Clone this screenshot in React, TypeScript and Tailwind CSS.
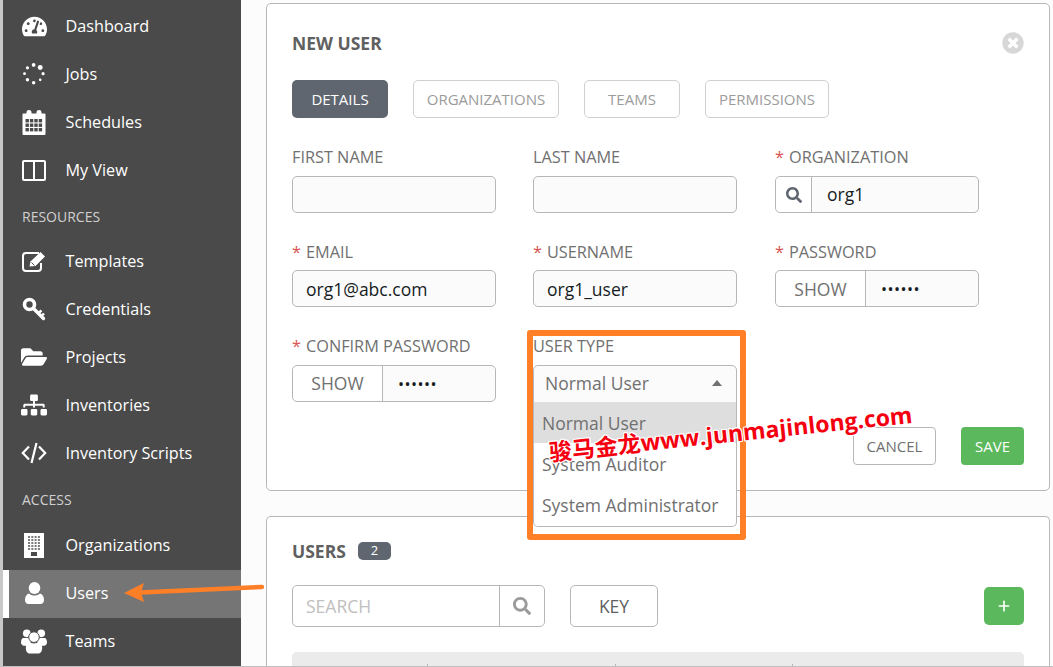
import { ReactNode } from 'react'
import { FaFolderOpen, FaSearch, FaSitemap, FaTachometerAlt, FaTimesCircle } from 'react-icons/fa'
import { Plus } from 'lucide-react'

const font = { fontFamily: '"Open Sans", "Noto Sans CJK SC", sans-serif' }

function JobsIcon() {
  const dots = [
    [16, 3, 2.6],
    [25, 6.5, 3.4],
    [29, 15, 2.2],
    [25, 23.5, 1.8],
    [16, 27.5, 2.4],
    [7.500, 23.5, 2.4],
    [3.5, 15, 2],
    [7.500, 7, 2.2],
  ]
  return (
    <svg width="24" height="24" viewBox="0 0 33 31" fill="white">
      {dots.map(([x, y, r], i) => (
        <circle key={i} cx={x} cy={y} r={r} />
      ))}
    </svg>
  )
}

function CalendarIcon() {
  const cells = [0, 1, 2, 3]
  return (
    <svg width="24" height="25" viewBox="0 0 24 25" fill="white">
      <path d="M1.5 3.5h3V2a2.5 2 0 0 1 5 0v1.5h5V2a2.5 2 0 0 1 5 0v1.5h3a1 1 0 0 1 1 1V24a1 1 0 0 1-1 1h-21a1 1 0 0 1-1-1V4.500a1 1 0 0 1 1-1z" />
      {[9, 13.5, 18].map((y) =>
        cells.map((c) => <rect key={`${y}-${c}`} x={3.5 + c * 4.4} y={y} width="3.4" height="3.4" fill="#4a4a4a" />),
      )}
    </svg>
  )
}

function ColumnsIcon() {
  return (
    <svg width="24" height="21" viewBox="0 0 24 21" fill="none" stroke="white" strokeWidth="2">
      <rect x="1" y="1" width="22" height="19" rx="1" />
      <path d="M12 1v19" />
    </svg>
  )
}

function EditIcon() {
  return (
    <svg width="25" height="21" viewBox="0 0 25 21" fill="none">
      <path d="M17 2H4a3 3 0 0 0-3 3v12a3 3 0 0 0 3 3h12a3 3 0 0 0 3-3v-5" stroke="white" strokeWidth="2" />
      <path d="M7.500 15.500l1-5L18.500 1l4.500 4.500-9.500 9.500z" fill="white" />
      <path d="M9.500 11.500l3 3" stroke="#4a4a4a" strokeWidth="1" />
    </svg>
  )
}

function KeyIcon() {
  return (
    <svg width="24" height="24" viewBox="0 0 24 24" fill="none" stroke="white">
      <circle cx="7.500" cy="7.500" r="5" strokeWidth="3.600" />
      <path d="M11.500 11.500l10 10" strokeWidth="3.400" strokeLinecap="round" />
      <path d="M16.500 16l3-2.500M19.500 19l2.500-2.500" strokeWidth="2.400" />
    </svg>
  )
}

function CodeIcon() {
  return (
    <svg width="26" height="22" viewBox="0 0 26 22" fill="none" stroke="white" strokeWidth="2.200">
      <path d="M8 4.500L1.800 11 8 17.500M18 4.500L24.200 11 18 17.500M15.500 1L10.500 21" />
    </svg>
  )
}

function BuildingIcon() {
  const cols = [0, 1, 2, 3]
  const rows = [0, 1, 2, 3, 4]
  return (
    <svg width="20" height="25" viewBox="0 0 20 25" fill="white">
      <rect x="0" y="0" width="20" height="25" />
      {rows.map((r) =>
        cols.map((c) => <rect key={`${r}-${c}`} x={4 + c * 3.3} y={3 + r * 3} width="2" height="2" fill="#7a7a7a" />),
      )}
      <rect x="7" y="19" width="6" height="4" fill="#4a4a4a" />
    </svg>
  )
}

function UserIcon() {
  return (
    <svg width="19" height="22" viewBox="0 0 19 22" fill="white">
      <ellipse cx="9.500" cy="6" rx="5.800" ry="6" />
      <path d="M4 11.500c1.500 1.500 3.500 2 5.500 2s4-.5 5.500-2c2.500.5 4 3 4 6.500 0 2.500-1.500 4-3.500 4h-12C1.500 22 0 20.500 0 18c0-3.500 1.500-6 4-6.500z" />
    </svg>
  )
}

function TeamIcon() {
  return (
    <svg width="27" height="26" viewBox="0 0 27 26" fill="white">
      <circle cx="6" cy="5" r="4" />
      <circle cx="21" cy="5" r="4" />
      <path d="M2 10h8v8H4c-2 0-4-1-4-3.500C0 12 1 10.500 2 10zM17 10h8c1 .5 2 2 2 4.500 0 2.500-2 3.500-4 3.500h-6z" />
      <circle cx="13.500" cy="9" r="5.500" stroke="#4a4a4a" strokeWidth="1" />
      <path d="M8 14c1.500 1 3.500 1.500 5.500 1.500S17.500 15 19 14c2 .5 3 3 3 6 0 3.500-1.500 6-4 6H9c-2.500 0-4-2.500-4-6 0-3 1-5.500 3-6z" />
    </svg>
  )
}

function NavItem({ icon, label, active }: { icon: ReactNode; label: string; active?: boolean }) {
  return (
    <div
      className={`flex items-center h-12 text-[16.2px] text-white ${
        active ? 'bg-[#757575] border-l-[6px] border-white pb-[2px]' : ''
      }`}
    >
      <span className={`flex items-center justify-center w-[26px] ${active ? 'ml-[12px]' : 'ml-[18px]'}`}>{icon}</span>
      <span className="ml-[18.5px]">{label}</span>
    </div>
  )
}

function NavHeader({ label, className }: { label: string; className: string }) {
  return <div className={`flex items-center pl-[19px] text-[14px] text-[#d0d0d0] ${className}`}>{label}</div>
}

function Sidebar() {
  return (
    <aside className="w-[241px] shrink-0 h-full bg-[#4a4a4a] border-l-[3px] border-[#c8c8c8] pt-[2px] overflow-hidden">
      <NavItem icon={<FaTachometerAlt size={25} color="white" />} label="Dashboard" />
      <NavItem icon={<JobsIcon />} label="Jobs" />
      <NavItem icon={<CalendarIcon />} label="Schedules" />
      <NavItem icon={<ColumnsIcon />} label="My View" />
      <NavHeader label="RESOURCES" className="h-[43px] pt-[2px]" />
      <NavItem icon={<EditIcon />} label="Templates" />
      <NavItem icon={<KeyIcon />} label="Credentials" />
      <NavItem icon={<FaFolderOpen size={26} color="white" />} label="Projects" />
      <NavItem icon={<FaSitemap size={26} color="white" />} label="Inventories" />
      <NavItem icon={<CodeIcon />} label="Inventory Scripts" />
      <NavHeader label="ACCESS" className="h-[44px]" />
      <NavItem icon={<BuildingIcon />} label="Organizations" />
      <div className="h-px" />
      <NavItem active icon={<UserIcon />} label="Users" />
      <div className="-mt-px">
        <NavItem icon={<TeamIcon />} label="Teams" />
      </div>
    </aside>
  )
}

function Tab({ label, active, className }: { label: string; active?: boolean; className: string }) {
  return (
    <div
      className={`flex items-center justify-center h-[38px] rounded-[5px] text-[15px] ${className} ${
        active ? 'bg-[#5f6670] text-white' : 'border border-[#d0d0d0] text-[#9b9b9b]'
      }`}
    >
      {label}
    </div>
  )
}

function Label({ text, required, tight }: { text: string; required?: boolean; tight?: boolean }) {
  return (
    <div className={`h-[20px] flex items-center text-[16.3px] leading-5 text-[#707070] ${tight ? 'mb-[8px]' : 'mb-[9px]'}`}>
      {required && <span className="text-[#d9534f] mr-[5px]">*</span>}
      {text}
    </div>
  )
}

function TextInput({ value }: { value?: string }) {
  return (
    <div className="h-[37px] w-[204px] flex items-center px-[13px] pt-[2px] rounded-[5px] border border-[#b7b7b7] bg-[#fbfbfb] text-[17.5px] text-[#161b1f]">
      {value}
    </div>
  )
}

function PasswordInput({ low }: { low?: boolean }) {
  return (
    <div className="h-[37px] w-[204px] flex items-center rounded-[5px] border border-[#b7b7b7] bg-[#fbfbfb]">
      <div
        className={`w-[90px] h-full flex items-center justify-center border-r border-[#b7b7b7] bg-white rounded-l-[5px] text-[17.5px] text-[#707070] ${
          low ? 'pt-[2px]' : ''
        }`}
      >
        SHOW
      </div>
      <div className="pl-[15px] text-[16px] text-[#161b1f] tracking-[0.5px]">••••••</div>
    </div>
  )
}

function UserTypeField() {
  return (
    <div className="relative w-[204px]">
      <Label text="USER TYPE" />
      <div className="h-[38px] flex items-center justify-between pl-[11px] pr-[14px] pb-[2px] rounded-t-[5px] border border-[#b7b7b7] bg-[#fbfbfb] text-[17.5px] text-[#707070]">
        Normal User
        <span className="w-0 h-0 border-x-[5px] border-x-transparent border-b-[6px] border-b-[#707070]" />
      </div>
      <div className="absolute left-0 right-0 top-[66px] h-[125px] rounded-b-[5px] border border-t-0 border-[#b7b7b7] bg-white text-[17.5px] text-[#707070] z-10">
        <div className="h-[41px] flex items-center pl-[8px] pt-[2px] bg-[#dedede]">Normal User</div>
        <div className="h-[41px] flex items-center pl-[8px] pt-[2px]">System Auditor</div>
        <div className="h-[41px] flex items-center pl-[8px] pt-[2px]">System Administrator</div>
      </div>
    </div>
  )
}

function NewUserPanel() {
  return (
    <section className="relative h-[488px] shrink-0 rounded-[5px] border border-[#b7b7b7] bg-white pl-[25px] pr-[25px] pt-[27px]">
      <div className="flex items-center justify-between h-[24px]">
        <h2 className="text-[17.5px] font-bold text-[#606060]">NEW USER</h2>
        <FaTimesCircle size={22} color="#d7d7d7" />
      </div>
      <div className="flex gap-[25px] mt-[25px]">
        <Tab label="DETAILS" active className="w-[96px]" />
        <Tab label="ORGANIZATIONS" className="w-[146px]" />
        <Tab label="TEAMS" className="w-[96px]" />
        <Tab label="PERMISSIONS" className="w-[124px]" />
      </div>
      <div className="grid grid-cols-[204px_205px_204px] gap-x-[37px] mt-[29px]">
        <div className="h-[95px]">
          <Label text="FIRST NAME" />
          <TextInput />
        </div>
        <div>
          <Label text="LAST NAME" />
          <TextInput />
        </div>
        <div>
          <Label text="ORGANIZATION" required />
          <div className="h-[37px] flex items-center rounded-[5px] border border-[#b7b7b7] bg-[#fbfbfb]">
            <div className="w-[36px] h-full flex items-center justify-center border-r border-[#b7b7b7] bg-white rounded-l-[5px]">
              <FaSearch size={16} color="#5f6670" />
            </div>
            <div className="pl-[15px] text-[17.5px] text-[#161b1f]">org1</div>
          </div>
        </div>
        <div className="h-[94px]">
          <Label text="EMAIL" required tight />
          <TextInput value="org1@abc.com" />
        </div>
        <div>
          <Label text="USERNAME" required tight />
          <TextInput value="org1_user" />
        </div>
        <div>
          <Label text="PASSWORD" required tight />
          <PasswordInput low />
        </div>
        <div>
          <Label text="CONFIRM PASSWORD" required />
          <PasswordInput />
        </div>
        <UserTypeField />
      </div>
      <div className="absolute right-[25px] top-[423px] flex gap-[25px]">
        <div className="w-[83px] h-[38px] flex items-center justify-center rounded-[4px] border border-[#b7b7b7] bg-white text-[15px] text-[#707070]">
          CANCEL
        </div>
        <div className="w-[63px] h-[38px] flex items-center justify-center rounded-[4px] bg-[#5cb85c] text-[15px] text-white">
          SAVE
        </div>
      </div>
    </section>
  )
}

function UsersPanel() {
  return (
    <section className="flex-1 mt-[25px] rounded-t-[5px] border border-b-0 border-[#b7b7b7] bg-white pl-[25px] pr-[25px] pt-[24px]">
      <div className="flex items-center h-[20px]">
        <h2 className="text-[17.5px] font-bold text-[#606060]">USERS</h2>
        <span className="ml-[12px] w-[33px] h-[18px] flex items-center justify-center rounded-[5px] bg-[#5f6670] text-[13px] text-white">
          2
        </span>
      </div>
      <div className="flex items-center mt-[24px] h-[42px]">
        <div className="w-[253px] h-[42px] flex items-center rounded-[5px] border border-[#b7b7b7]">
          <div className="flex-1 pl-[13px] text-[17.5px] text-[#c0c0c0]">SEARCH</div>
          <div className="w-[45px] h-full flex items-center justify-center border-l border-[#b7b7b7]">
            <FaSearch size={18} color="#9b9b9b" />
          </div>
        </div>
        <div className="ml-[25px] w-[88px] h-[42px] flex items-center justify-center rounded-[5px] border border-[#b7b7b7] text-[17.5px] text-[#606060]">
          KEY
        </div>
        <div className="ml-auto w-[40px] h-[38px] flex items-center justify-center rounded-[5px] bg-[#5cb85c]">
          <Plus size={16} color="white" strokeWidth={2.5} />
        </div>
      </div>
      <div className="relative mt-[25px] h-[14px] rounded-t-[5px] bg-[#ebebeb]">
        <span className="absolute left-[135px] bottom-0 w-px h-[2px] bg-[#b7b7b7]" />
        <span className="absolute left-[323px] bottom-0 w-px h-[2px] bg-[#b7b7b7]" />
        <span className="absolute left-[500px] bottom-0 w-px h-[2px] bg-[#b7b7b7]" />
      </div>
    </section>
  )
}

function Annotations() {
  return (
    <>
      <div className="absolute left-[527px] top-[330px] w-[219px] h-[210px] rounded-[3px] border-[6px] border-[#ff7f27] z-20" />
      <svg className="absolute left-[120px] top-[575px] z-20" width="146" height="30" viewBox="0 0 146 30">
        <path d="M20 17.500 L142 12" stroke="#ff7f27" strokeWidth="4.500" strokeLinecap="round" />
        <path d="M4 18 L24 8 L21 17.500 L24 27 Z" fill="#ff7f27" />
      </svg>
      <div className="absolute left-[549px] top-[438px] z-30 origin-left -rotate-[6deg] whitespace-nowrap text-[23px] leading-7 font-bold text-[#f5000f] [text-shadow:1px_0_0_white,-1px_0_0_white,0_1px_0_white,0_-1px_0_white,1px_1px_0_white,-1px_-1px_0_white,1px_-1px_0_white,-1px_1px_0_white]">
        骏马金龙www.junmajinlong.com
      </div>
    </>
  )
}

export default function App() {
  return (
    <div className="relative flex w-[1053px] h-[667px] overflow-hidden bg-[#fcfcfc] border-b border-[#c0c0c0]" style={font}>
      <Sidebar />
      <main className="flex-1 flex flex-col pl-[25px] pr-[3px] pt-[3px] min-w-0">
        <NewUserPanel />
        <UsersPanel />
      </main>
      <Annotations />
    </div>
  )
}
